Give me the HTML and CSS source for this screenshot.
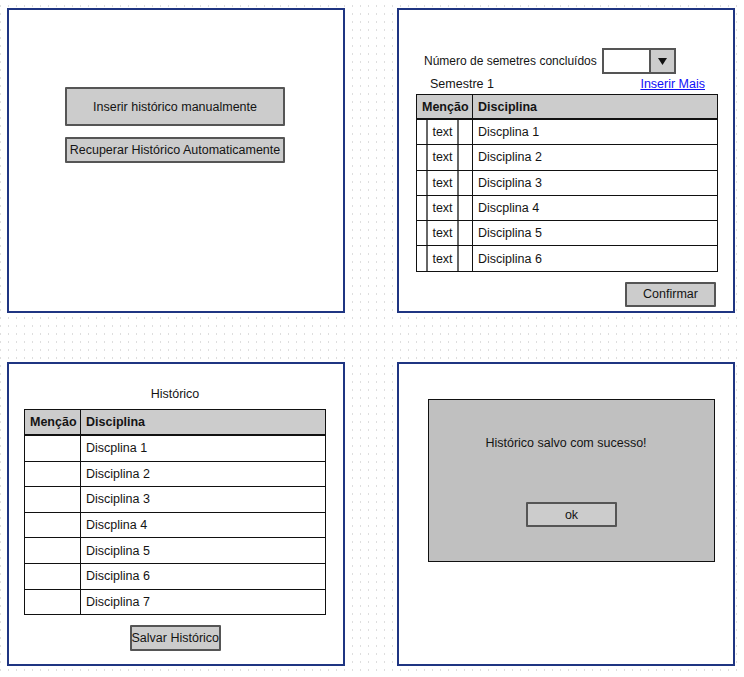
FILE: index.html
```html
<!DOCTYPE html>
<html lang="pt">
<head>
<meta charset="utf-8">
<title>Histórico</title>
<link rel="stylesheet" href="styles.css">
</head>
<body>
<main class="board">
  <section class="panel panel-start">
    <button class="btn btn-tall">Inserir histórico manualmente</button>
    <button class="btn btn-wide">Recuperar Histórico Automaticamente</button>
  </section>

  <section class="panel panel-semester">
    <div class="count-row">
      <span class="count-label">Número de semetres concluídos</span>
      <div class="select">
        <span class="select-value"></span>
        <span class="select-arrow"><svg width="9" height="7" viewBox="0 0 9 7"><path d="M0 0H9L4.5 7Z" fill="#111"/></svg></span>
      </div>
    </div>
    <div class="sem-row">
      <span>Semestre 1</span>
      <a class="link" href="#">Inserir Mais</a>
    </div>
    <table class="grid grid-edit">
      <colgroup><col class="col-mencao"><col></colgroup>
      <thead><tr><th>Menção</th><th>Disciplina</th></tr></thead>
      <tbody>
        <tr><td class="cell-input"><div class="input">text</div></td><td>Discplina 1</td></tr>
        <tr><td class="cell-input"><div class="input">text</div></td><td>Disciplina 2</td></tr>
        <tr><td class="cell-input"><div class="input">text</div></td><td>Disciplina 3</td></tr>
        <tr><td class="cell-input"><div class="input">text</div></td><td>Discplina 4</td></tr>
        <tr><td class="cell-input"><div class="input">text</div></td><td>Disciplina 5</td></tr>
        <tr><td class="cell-input"><div class="input">text</div></td><td>Disciplina 6</td></tr>
      </tbody>
    </table>
    <div class="actions-right">
      <button class="btn btn-small">Confirmar</button>
    </div>
  </section>

  <section class="panel panel-history">
    <div class="title">Histórico</div>
    <table class="grid grid-view">
      <colgroup><col class="col-mencao"><col></colgroup>
      <thead><tr><th>Menção</th><th>Disciplina</th></tr></thead>
      <tbody>
        <tr><td></td><td>Discplina 1</td></tr>
        <tr><td></td><td>Disciplina 2</td></tr>
        <tr><td></td><td>Disciplina 3</td></tr>
        <tr><td></td><td>Discplina 4</td></tr>
        <tr><td></td><td>Disciplina 5</td></tr>
        <tr><td></td><td>Disciplina 6</td></tr>
        <tr><td></td><td>Disciplina 7</td></tr>
      </tbody>
    </table>
    <div class="actions-center">
      <button class="btn btn-small btn-tight">Salvar Histórico</button>
    </div>
  </section>

  <section class="panel panel-done">
    <div class="dialog">
      <div class="dialog-text">Histórico salvo com sucesso!</div>
      <div class="actions-center dialog-actions">
        <button class="btn btn-small">ok</button>
      </div>
    </div>
  </section>
</main>
</body>
</html>
```

FILE: styles.css
```css
html, body {
  margin: 0;
  padding: 0;
}

body {
  width: 744px;
  height: 677px;
  overflow: hidden;
  font-family: "Liberation Sans", Arial, sans-serif;
  font-size: 12.5px;
  color: #141414;
  background-color: #fff;
  background-image:
    linear-gradient(to bottom, #fff 5px, transparent 5px, transparent 7px, #fff 7px),
    linear-gradient(to right, #dedede 1px, #fff 1px);
  background-size: 8px 8px;
}

.board {
  display: grid;
  grid-template-columns: 338px 338px;
  grid-template-rows: 305px 304px;
  column-gap: 52px;
  row-gap: 49px;
  padding: 8px 0 0 7px;
}

.panel {
  box-sizing: border-box;
  border: 2px solid #1f3582;
  background: #fff;
}

.btn {
  box-sizing: border-box;
  display: flex;
  align-items: center;
  justify-content: center;
  padding: 0;
  margin: 0;
  font: inherit;
  color: #141414;
  background: #cccccc;
  border: 2px solid #555;
  border-radius: 1px;
  white-space: nowrap;
}

/* panel 1 */
.panel-start {
  display: flex;
  flex-direction: column;
  align-items: flex-start;
  gap: 11px;
  padding: 77px 0 0 56px;
}

.btn-tall {
  width: 220px;
  height: 39px;
}

.btn-wide {
  width: 220px;
  height: 26px;
}

/* panel 2 */
.panel-semester {
  padding: 38px 15px 0 17px;
}

.count-row {
  display: grid;
  grid-template-columns: 178px 74px;
  align-items: center;
  height: 26px;
  margin-left: 8px;
}

.count-label {
  white-space: nowrap;
  font-size: 12px;
}

.select {
  display: flex;
  box-sizing: border-box;
  height: 26px;
  border: 2px solid #555;
  background: #fff;
}

.select-value {
  flex: 1;
  border-right: 2px solid #555;
}

.select-arrow {
  width: 23px;
  display: flex;
  align-items: center;
  justify-content: center;
  background: #cccccc;
}

.sem-row {
  display: flex;
  justify-content: space-between;
  align-items: center;
  height: 20px;
  padding: 0 13px 0 14px;
}

.link {
  color: #1010f8;
  text-decoration: underline;
}

.grid {
  width: 302px;
  border-collapse: collapse;
  table-layout: fixed;
  border: 1px solid #111;
}

.col-mencao {
  width: 56px;
}

.grid th {
  height: 23px;
  padding: 0 0 0 5px;
  text-align: left;
  font-weight: bold;
  background: #cccccc;
  border: 1px solid #111;
  border-bottom: 2px solid #111;
}

.grid td {
  padding: 0 0 0 5px;
  border: 1px solid #111;
}

.grid-edit td {
  height: 23.3px;
}

.grid-edit td.cell-input {
  padding: 0 13px 0 9px;
}

.input {
  box-sizing: border-box;
  height: 24.3px;
  display: flex;
  align-items: center;
  justify-content: center;
  border-left: 2px solid #666;
  border-right: 2px solid #666;
}

.actions-right {
  display: flex;
  justify-content: flex-end;
  margin: 10px 2px 0 0;
}

.btn-small {
  width: 91px;
  height: 25px;
}

/* panel 3 */
.panel-history {
  padding: 22px 17px 0 15px;
}

.title {
  line-height: 16px;
  height: 16px;
  text-align: center;
  margin-bottom: 7px;
}

.grid-view th {
  height: 24px;
}

.grid-view td {
  height: 24.6px;
}

.grid-view td:first-child {
  padding: 0;
}

.actions-center {
  display: flex;
  justify-content: center;
  margin-top: 10px;
}

.btn-tight {
  height: 26px;
  justify-content: flex-start;
  overflow: visible;
}

/* panel 4 */
.panel-done {
  padding: 35px 0 0 29px;
}

.dialog {
  box-sizing: border-box;
  width: 287px;
  height: 163px;
  background: #c0c0c0;
  border: 1px solid #111;
}

.dialog-text {
  margin-top: 35px;
  padding-right: 11px;
  line-height: 16px;
  text-align: center;
}

.dialog-actions {
  margin-top: 51px;
}
```
